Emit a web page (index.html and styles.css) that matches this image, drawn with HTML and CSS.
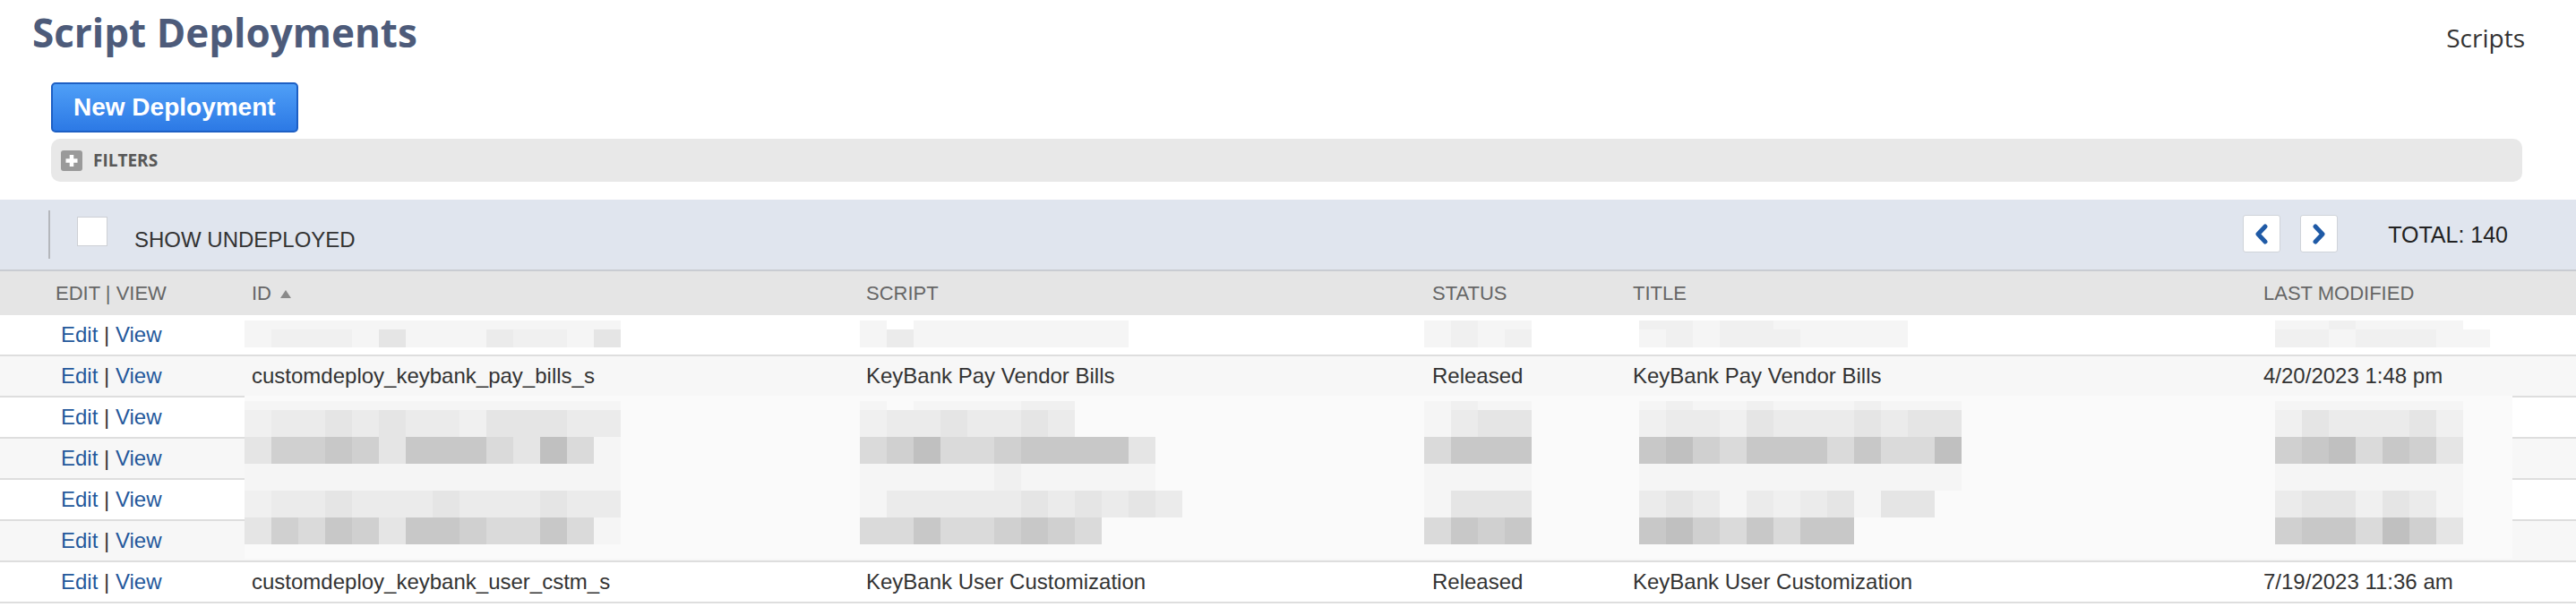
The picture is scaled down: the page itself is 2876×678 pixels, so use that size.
FILE: index.html
```html
<!DOCTYPE html>
<html lang="en">
<head>
    <meta charset="UTF-8">
    <title>Script Deployments</title>
    <link rel="stylesheet" href="styles.css">
</head>
<body>

    <div class="page-head">
        <h1 class="page-title">Script Deployments</h1>
        <a class="crumb" href="#">Scripts</a>
    </div>

    <div class="actions">
        <button class="btn-primary">New Deployment</button>
    </div>

    <div class="filters">
        <svg width="24" height="23" viewBox="0 0 24 23"><rect width="24" height="23" rx="3" fill="#9a9a9a"/><path d="M12 5v13M5.5 11.5h13" stroke="#fff" stroke-width="4.5"/></svg>
        <span>FILTERS</span>
    </div>

    <div class="pager-bar">
        <div class="pager-left">
            <span class="divider"></span>
            <span class="checkbox"></span>
            <span class="pager-label">SHOW UNDEPLOYED</span>
        </div>
        <div class="pager-right">
            <button class="page-btn"><svg width="42" height="42" viewBox="0 0 42 42"><path d="M25 13 L17 21.5 L25 30" fill="none" stroke="#1f5aa6" stroke-width="5" stroke-linejoin="round" stroke-linecap="round"/></svg></button>
            <button class="page-btn"><svg width="42" height="42" viewBox="0 0 42 42"><path d="M17 13 L25 21.5 L17 30" fill="none" stroke="#1f5aa6" stroke-width="5" stroke-linejoin="round" stroke-linecap="round"/></svg></button>
            <span class="total">TOTAL: 140</span>
        </div>
    </div>

    <table class="list">
        <colgroup>
            <col style="width:281px">
            <col style="width:686px">
            <col style="width:632px">
            <col style="width:224px">
            <col style="width:704px">
            <col>
        </colgroup>
        <thead>
            <tr>
                <th>EDIT | VIEW</th>
                <th>ID <svg class="sort" width="12" height="9" viewBox="0 0 12 9"><path d="M6 0 L12 9 L0 9 Z" fill="#8a8a8a"/></svg></th>
                <th>SCRIPT</th>
                <th>STATUS</th>
                <th>TITLE</th>
                <th>LAST MODIFIED</th>
            </tr>
        </thead>
        <tbody>
            <tr>
                <td><a href="#">Edit</a> | <a href="#">View</a></td>
                <td></td><td></td><td></td><td></td><td></td>
            </tr>
            <tr>
                <td><a href="#">Edit</a> | <a href="#">View</a></td>
                <td>customdeploy_keybank_pay_bills_s</td>
                <td>KeyBank Pay Vendor Bills</td>
                <td>Released</td>
                <td>KeyBank Pay Vendor Bills</td>
                <td>4/20/2023 1:48 pm</td>
            </tr>
            <tr>
                <td><a href="#">Edit</a> | <a href="#">View</a></td>
                <td></td><td></td><td></td><td></td><td></td>
            </tr>
            <tr>
                <td><a href="#">Edit</a> | <a href="#">View</a></td>
                <td></td><td></td><td></td><td></td><td></td>
            </tr>
            <tr>
                <td><a href="#">Edit</a> | <a href="#">View</a></td>
                <td></td><td></td><td></td><td></td><td></td>
            </tr>
            <tr>
                <td><a href="#">Edit</a> | <a href="#">View</a></td>
                <td></td><td></td><td></td><td></td><td></td>
            </tr>
            <tr>
                <td><a href="#">Edit</a> | <a href="#">View</a></td>
                <td>customdeploy_keybank_user_cstm_s</td>
                <td>KeyBank User Customization</td>
                <td>Released</td>
                <td>KeyBank User Customization</td>
                <td>7/19/2023 11:36 am</td>
            </tr>
        </tbody>
    </table>

    <!-- pixelated (redacted) rows drawn over the list -->
    <div class="redact" id="redact">
        <div class="smear"></div>
    </div>

    <script src="script.js"></script>
</body>
</html>
```

FILE: styles.css
```css
body {
    margin: 0;
    position: relative;
    background: #fff;
    color: #333;
    font-family: "Liberation Sans", Arial, sans-serif;
}

.page-head {
    display: flex;
    justify-content: space-between;
    align-items: baseline;
    padding: 13px 57px 0 36px;
}

.page-title {
    margin: 0;
    font: 700 44px/46px "Open Sans", sans-serif;
    color: #4d5b7a;
}

.crumb {
    font: 400 28px "Open Sans", sans-serif;
    color: #333;
    text-decoration: none;
}

.actions {
    padding: 31px 0 0 57px;
}

.btn-primary {
    height: 56px;
    padding: 0 23px;
    font: 700 28px "Liberation Sans", Arial, sans-serif;
    color: #fff;
    background: linear-gradient(#4f9ff7, #2c79e5);
    border: 2px solid #1d5fc4;
    border-radius: 5px;
    cursor: pointer;
}

.filters {
    display: flex;
    align-items: center;
    gap: 12px;
    height: 48px;
    margin: 7px 60px 0 57px;
    padding-left: 11px;
    background: #e8e8e8;
    border-radius: 10px;
    font: 700 19px "Open Sans", sans-serif;
    color: #585858;
}

.pager-bar {
    display: flex;
    justify-content: space-between;
    align-items: center;
    height: 78px;
    margin-top: 20px;
    padding: 0 76px 0 54px;
    background: #e0e5ee;
    border-bottom: 2px solid #c9ccd2;
}

.pager-left,
.pager-right {
    display: flex;
    align-items: center;
}

.divider {
    width: 2px;
    height: 54px;
    background: #b4b7bc;
}

.checkbox {
    width: 32px;
    height: 31px;
    margin: -8px 0 0 30px;
    background: #fff;
    border: 1px solid #cdd0d5;
}

.pager-label {
    margin: 12px 0 0 30px;
    font-size: 24px;
    color: #333;
}

.page-btn {
    width: 42px;
    height: 42px;
    padding: 0;
    margin-top: -3px;
    background: #fff;
    border: 1px solid #cfd3d9;
    border-radius: 3px;
    cursor: pointer;
}

.page-btn + .page-btn {
    margin-left: 22px;
}

.page-btn svg {
    display: block;
    margin: -1px;
}

.total {
    margin-left: 56px;
    font-size: 25px;
    color: #222;
}

.list {
    width: 100%;
    table-layout: fixed;
    border-spacing: 0;
}

.list th {
    height: 49px;
    padding: 0;
    background: #e5e5e5;
    font-size: 22px;
    font-weight: 400;
    color: #666;
    text-align: left;
    white-space: nowrap;
}

.list td {
    height: 44px;
    padding: 0;
    border-bottom: 2px solid #dedede;
    font-size: 24px;
    color: #333;
    white-space: nowrap;
}

.list th:first-child {
    padding-left: 62px;
}

.list td:first-child {
    padding-left: 68px;
}

.list tbody tr:nth-child(even) td {
    background: #f7f7f7;
}

.list a {
    color: #24589b;
    text-decoration: none;
}

.sort {
    margin-left: 4px;
    vertical-align: 2px;
}

.redact {
    position: absolute;
    top: 0;
    left: 0;
}

.smear {
    position: absolute;
    left: 273px;
    top: 442px;
    width: 2532px;
    height: 182px;
    background: #fafafa;
}

.mosaic {
    position: absolute;
}

.mosaic-row {
    display: flex;
}

.mosaic-row span {
    width: 30px;
    flex: none;
}

.s1 { background: #f5f5f5; }
.s2 { background: #f0f0f0; }
.s3 { background: #ebebeb; }
.s4 { background: #e5e5e5; }
.s5 { background: #dadada; }
.s6 { background: #d0d0d0; }
.s7 { background: #c8c8c8; }
.s8 { background: #c0c0c0; }
```

FILE: script.js
```js
// gray levels of the pixelated cells, one string per band of blocks
const blurs = [
    // first row
    { x: 273, y: 358, rows: [[10, '11111111111111'], [20, '12221411132214']] },
    { x: 960, y: 358, rows: [[10, '1011111111'], [20, '1311111111']] },
    { x: 1590, y: 358, rows: [[10, '1211'], [20, '1212']] },
    { x: 1830, y: 358, rows: [[10, '2212211111'], [20, '1212221111']] },
    { x: 2540, y: 358, rows: [[10, '11211110'], [20, '22122211']] },

    // rows three to six
    { x: 273, y: 448, rows: [
        [10, '11111111111111'],
        [30, '23343433244433'],
        [30, '46676477754851'],
        [30, '11111111111111'],
        [30, '23343334333433'],
        [30, '46576477655751']
    ] },
    { x: 960, y: 448, rows: [
        [10, '1011112200000'],
        [30, '2334334300000'],
        [30, '5685567777400'],
        [30, '1111121111100'],
        [30, '1333334343430'],
        [30, '5575567650000']
    ] },
    { x: 1590, y: 448, rows: [
        [10, '1211'],
        [30, '1344'],
        [30, '5777'],
        [30, '1111'],
        [30, '1444'],
        [30, '5767']
    ] },
    { x: 1830, y: 448, rows: [
        [10, '1211211121110'],
        [30, '2332433343440'],
        [30, '7865777575580'],
        [30, '1111111111110'],
        [30, '3431323414400'],
        [30, '7865757700000']
    ] },
    { x: 2540, y: 448, rows: [
        [10, '1111111'],
        [30, '2433342'],
        [30, '6785764'],
        [30, '1111111'],
        [30, '3442431'],
        [30, '6775864']
    ] }
];

const layer = document.getElementById('redact');

blurs.forEach(blur => {
    const box = document.createElement('div');
    box.className = 'mosaic';
    box.style.left = blur.x + 'px';
    box.style.top = blur.y + 'px';

    blur.rows.forEach(([height, cells]) => {
        const row = document.createElement('div');
        row.className = 'mosaic-row';
        row.style.height = height + 'px';
        for (const c of cells) {
            const cell = document.createElement('span');
            if (c !== '0') cell.className = 's' + c;
            row.appendChild(cell);
        }
        box.appendChild(row);
    });

    layer.appendChild(box);
});
```
